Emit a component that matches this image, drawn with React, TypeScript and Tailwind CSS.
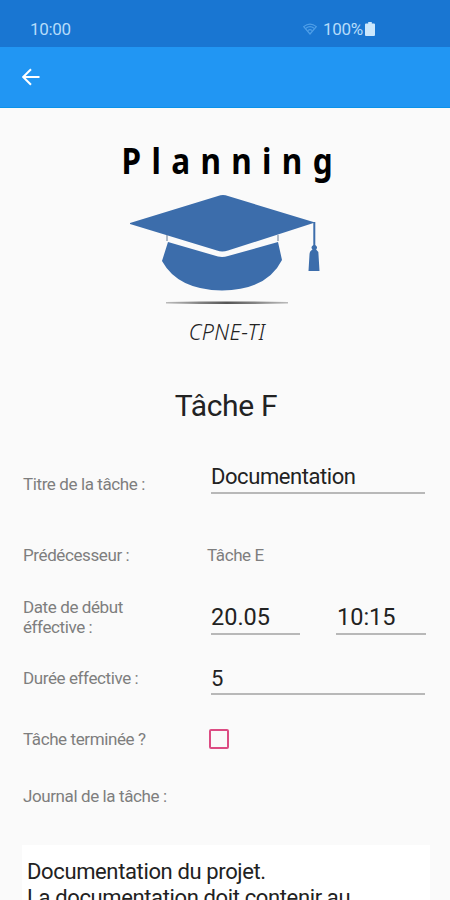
import type { ReactNode } from "react";

const label = "w-[184px] shrink-0 text-[17px] leading-5 tracking-[-0.4px] text-[#7e7e7e]";
const input = "border-b-2 border-[#b8b8b8] bg-transparent text-[#222] outline-none";

function StatusBar() {
  return (
    <div className="flex h-[47px] items-center bg-[#1976d2] pt-[11px] pl-[30px] text-[17px] leading-5 tracking-[-0.3px] text-[#b5dcfa]">
      <span className="w-[273px]">10:00</span>
      <svg viewBox="0 0 14 12" className="mr-[6px] h-3 w-[14px]" fill="none" stroke="#4f9fe8" strokeWidth="1.2">
        <path d="M.7 3.600Q7-1.400 13.300 3.600L7 11Z" />
        <path d="M3 5.200Q7 2.200 11 5.200M5.100 7.400Q7 6 8.900 7.400" />
      </svg>
      <span className="w-[42px]">100%</span>
      <svg viewBox="0 0 10 14" className="h-[14px] w-[10px]" fill="#cbe7fc">
        <path d="M3.200 0h3.600v1.600H9q1 0 1 1V13q0 1-1 1H1q-1 0-1-1V2.600q0-1 1-1h2.200z" />
      </svg>
    </div>
  );
}

function Logo() {
  return (
    <div className="flex flex-col items-center">
      <h1 className="mt-[27px] h-[55px] scale-x-[0.9] pl-[15px] font-['Noto_Sans'] text-[35px] leading-[52px] font-bold tracking-[11.5px] whitespace-nowrap text-black">
        Planning
      </h1>
      <svg viewBox="125 190 200 118" className="h-[118px] w-[200px]">
        <defs>
          <linearGradient id="rule">
            <stop offset="0" stopColor="#bbb" />
            <stop offset=".5" stopColor="#555" />
            <stop offset="1" stopColor="#bbb" />
          </linearGradient>
        </defs>
        <g fill="#3c6dab">
          <path d="M130 223 218 196Q223 194 228 196L315 222.500 228 250.500Q222 252.500 217 250.500L130 224Z" />
          <path d="M168 242 218 256.500Q223 257.500 228 256L278 242 282 260Q267 290 222 290.500 178 290 162 261Z" />
          <path d="M313.300 222h2v23q3 2 .8 4.500 2.400 1.500 2.400 5l1 16.500h-11l1-16.500q0-3.500 3-5-2.400-2.500.8-4.500z" />
        </g>
        <path d="M167 235v6M278 235v6" stroke="#667b94" strokeWidth="1" />
        <path d="M166 302 200 301.500H253L288 302V303.500L253 304H200L166 303.500Z" fill="url(#rule)" />
      </svg>
      <p className="mt-[11px] ml-1 font-['Noto_Sans'] text-[21.5px] leading-[26px] font-light tracking-[0.4px] text-[#222] italic">
        CPNE-TI
      </p>
    </div>
  );
}

function Row({ title, className, children }: { title: string; className: string; children?: ReactNode }) {
  return (
    <div className={`flex items-center ${className}`}>
      <span className={label}>{title}</span>
      {children}
    </div>
  );
}

export default function App() {
  return (
    <div className="h-[900px] w-[450px] overflow-hidden bg-[#fafafa] font-[Roboto,sans-serif]">
      <StatusBar />
      <header className="flex h-[61px] items-center border-b border-[#0b93e9] bg-[#2196f3] pl-[22px]">
        <svg viewBox="0 0 18 18" className="h-[18px] w-[18px]" fill="none" stroke="#fff" strokeWidth="2">
          <path d="M17.500 9H1.500M9 1.200 1.200 9 9 16.800" />
        </svg>
      </header>

      <Logo />
      <h2 className="mt-[41px] pl-[2px] text-center text-[30px] leading-10 tracking-[-0.3px] text-[#222]">Tâche F</h2>

      <form className="pr-[25px] pl-[23px]">
        <Row title="Titre de la tâche :" className="mt-[38px] h-10">
          <input
            defaultValue="Documentation"
            className={`${input} -mt-[14px] ml-1 h-[34px] w-[214px] pt-px text-[22px] tracking-[-0.43px]`}
          />
        </Row>
        <Row title="Prédécesseur :" className="mt-[31px] h-10">
          <span className="text-[17px] leading-5 tracking-[-0.4px] text-[#7e7e7e]">Tâche E</span>
        </Row>
        <div className="mt-5 flex h-[44px] items-center">
          <span className={label}>
            Date de début
            <br />
            éffective :
          </span>
          <div className="flex gap-9 pl-1">
            <input defaultValue="20.05" className={`${input} h-9 w-[89px] pt-[2px] text-[23.5px]`} />
            <input defaultValue="10:15" className={`${input} h-9 w-[90px] pt-[2px] pl-px text-[23.5px]`} />
          </div>
        </div>
        <Row title="Durée effective :" className="mt-[17px] h-[44px]">
          <input defaultValue="5" className={`${input} -mt-px ml-1 h-[34px] w-[214px] pt-[3px] text-[22px]`} />
        </Row>
        <Row title="Tâche terminée ?" className="mt-[19px] h-10">
          <button
            type="button"
            role="checkbox"
            aria-checked="false"
            className="ml-[2px] h-5 w-5 rounded-[2px] border-2 border-[#dc4c83]"
          />
        </Row>
        <Row title="Journal de la tâche :" className="mt-[17px] h-10" />
      </form>

      <div className="mt-[29px] ml-[22px] h-[100px] w-[408px] bg-white px-[5px] pt-[14px] text-[22px] leading-[26px] tracking-[-0.37px] text-[#222]">
        <p>Documentation du projet.</p>
        <p>La documentation doit contenir au</p>
      </div>
    </div>
  );
}
